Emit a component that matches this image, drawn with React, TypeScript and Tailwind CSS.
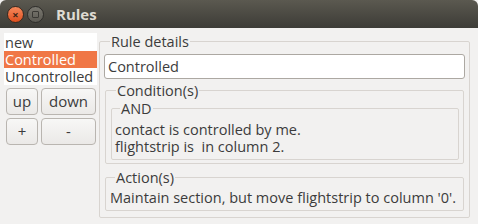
import React from "react";

const font = { fontFamily: '"Open Sans", "Liberation Sans", sans-serif' };

function Group({
  title,
  className,
  children,
}: {
  title: string;
  className?: string;
  children: React.ReactNode;
}) {
  return (
    <fieldset className={`min-w-0 border border-[#d8d4d0] rounded-[2px] ${className ?? ""}`}>
      <legend className="ml-[5px] px-[1px] text-[14.5px] leading-[17px]">{title}</legend>
      {children}
    </fieldset>
  );
}

const btn =
  "h-[27px] rounded-[4px] border border-[#b9b5b0] bg-gradient-to-b from-[#f7f7f6] to-[#ebe9e7] text-[15px] leading-none";

export default function App() {
  const items = ["new", "Controlled", "Uncontrolled"];
  return (
    <div className="w-[478px] h-[224px] bg-[#f2f1f0] text-[#3c3c3c] overflow-hidden" style={font}>
      {/* title bar */}
      <div className="h-[28px] rounded-t-[6px] bg-gradient-to-b from-[#5b5950] to-[#3d3c37] flex items-center pl-[7px] gap-[3px]">
        <div className="w-[17px] h-[17px] rounded-full bg-gradient-to-b from-[#f5885a] to-[#df4f1c] border border-[#3a2a20] flex items-center justify-center text-[#3a2416] text-[11px] leading-none font-bold">
          ×
        </div>
        <div className="w-[17px] h-[17px] rounded-full bg-gradient-to-b from-[#7a7870] to-[#5c5a53] border border-[#2e2d2a] flex items-center justify-center">
          <div className="w-[7px] h-[7px] border border-[#3a3935] rounded-[1px]" />
        </div>
        <span className="ml-[9px] text-[15px] font-bold text-[#dfdbd2]">Rules</span>
      </div>

      <div className="flex items-start pt-[5px]">
        {/* left column */}
        <div className="ml-[4px] w-[93px] shrink-0 flex flex-col">
          <div className="bg-white pt-[1px] text-[14.5px]">
            {items.map((it) => (
              <div
                key={it}
                className={`h-[17px] leading-[17px] pl-[1px] whitespace-nowrap ${
                  it === "Controlled" ? "bg-[#f07746] text-white" : ""
                }`}
              >
                {it}
              </div>
            ))}
          </div>
          <div className="mt-[3px] flex gap-[3px] pl-[2px]">
            <button className={`w-[32px] ${btn}`}>up</button>
            <button className={`w-[55px] ${btn}`}>down</button>
          </div>
          <div className="mt-[3px] flex gap-[3px] pl-[2px]">
            <button className={`w-[32px] ${btn}`}>+</button>
            <button className={`w-[55px] ${btn}`}>-</button>
          </div>
        </div>

        {/* right panel */}
        <Group title="Rule details" className="ml-[2px] w-[371px] shrink-0 px-[5px] pb-[6px]">
          <div className="mt-[4px] -mx-[1px] h-[25px] rounded-[3px] border border-[#aca8a2] bg-white text-[14.5px] leading-[23px] pl-[3px]">
            Controlled
          </div>
          <Group title="Condition(s)" className="mt-[3px] pl-[5px] pr-[4px] pb-[3px]">
            <Group title="AND" className="mt-[1px] pl-[3px] pb-[4px]">
              <div className="text-[14.5px] leading-[17px] pt-[4px]">
                <div>contact is controlled by me.</div>
                <div className="whitespace-pre">flightstrip is  in column 2.</div>
              </div>
            </Group>
          </Group>
          <Group title="Action(s)" className="mt-[5px] pl-[4px] pb-[4px]">
            <div className="text-[14.5px] leading-[17px] pt-[3px] whitespace-nowrap">
              Maintain section, but move flightstrip to column '0'.
            </div>
          </Group>
        </Group>
      </div>
    </div>
  );
}
